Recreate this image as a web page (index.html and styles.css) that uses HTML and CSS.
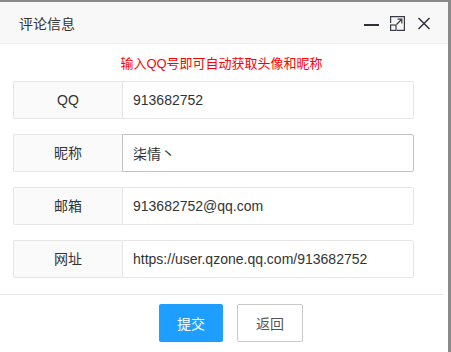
FILE: index.html
```html
<!DOCTYPE html>
<html lang="zh-CN">
<head>
    <meta charset="UTF-8">
    <meta name="viewport" content="width=device-width, initial-scale=1.0">
    <title>评论信息</title>
    <link rel="stylesheet" href="styles.css">
</head>
<body>

    <div class="layer">
        <div class="layer-title">
            <span>评论信息</span>
            <div class="layer-tools">
                <svg class="tool" width="15" height="14" viewBox="0 0 15 14">
                    <path d="M0 8h15" stroke="#2f2f3a" stroke-width="2"/>
                </svg>
                <svg class="tool" width="15" height="15" viewBox="0 0 15 15">
                    <path d="M0.6 7V0.6h13.8v13.8H7" fill="none" stroke="#3a3a46" stroke-width="1.2"/>
                    <rect x="0.6" y="9" width="5.4" height="5.4" fill="none" stroke="#3a3a46" stroke-width="1.2"/>
                    <path d="M6.5 8.5L11.5 3.5M7.5 3.2h4.3v4.3" fill="none" stroke="#3a3a46" stroke-width="1.2"/>
                </svg>
                <svg class="tool" width="12" height="13" viewBox="0 0 12 13">
                    <path d="M0.5 1l11 11M11.5 1l-11 11" stroke="#2f2f3a" stroke-width="1.5"/>
                </svg>
            </div>
        </div>

        <div class="layer-content">
            <p class="tip">输入QQ号即可自动获取头像和昵称</p>

            <form class="comment-form">
                <div class="form-item">
                    <label class="form-label">QQ</label>
                    <input class="form-input" type="text" value="913682752">
                </div>
                <div class="form-item">
                    <label class="form-label">昵称</label>
                    <input class="form-input hover" type="text" value="柒情丶">
                </div>
                <div class="form-item">
                    <label class="form-label">邮箱</label>
                    <input class="form-input" type="text" value="913682752@qq.com">
                </div>
                <div class="form-item">
                    <label class="form-label">网址</label>
                    <input class="form-input" type="text" value="https://user.qzone.qq.com/913682752">
                </div>
            </form>
        </div>

        <div class="layer-btns">
            <button class="btn btn-normal" type="button">提交</button>
            <button class="btn btn-primary" type="button">返回</button>
        </div>
    </div>

</body>
</html>
```

FILE: styles.css
```css
body {
    margin: 0;
    background-color: #8a8a8a;
    font-family: "Liberation Sans", "Noto Sans CJK SC", sans-serif;
    font-size: 14px;
    color: #333;
    overflow: hidden;
}

.layer {
    width: 448px;
    height: 360px;
    margin-top: 2px;
    background-color: #fff;
}

.layer-title {
    display: flex;
    align-items: center;
    justify-content: space-between;
    height: 41px;
    padding: 0 18px 0 19px;
    background-color: #f8f8f8;
    border-bottom: 1px solid #eee;
    color: #333;
}

.layer-tools {
    display: flex;
    align-items: center;
    gap: 11px;
    margin-top: 2px;
}

.layer-tools .tool:last-child {
    margin-left: 2px;
}

.tool {
    display: block;
}

.layer-content {
    width: 443px;
    padding-bottom: 16px;
    border-bottom: 1px solid #e6e6e6;
}

.tip {
    margin: 0;
    padding: 10px 0 7px;
    line-height: 20px;
    text-align: center;
    color: #ff0000;
    font-size: 13px;
}

.comment-form {
    margin: 0 0 0 13px;
    width: 401px;
}

.form-item {
    display: flex;
    height: 38px;
    margin-bottom: 15px;
}

.form-item:last-child {
    margin-bottom: 0;
}

.form-label {
    width: 108px;
    line-height: 36px;
    text-align: center;
    background-color: #fafafa;
    border: 1px solid #e6e6e6;
    border-right: none;
    border-radius: 2px 0 0 2px;
}

.form-input {
    flex: 1;
    min-width: 0;
    height: 38px;
    box-sizing: border-box;
    padding: 0 10px;
    margin: 0;
    border: 1px solid #e6e6e6;
    border-radius: 0 2px 2px 0;
    font-family: inherit;
    font-size: 14px;
    color: #333;
    outline: none;
}

.form-input.hover {
    border-color: #c2c2c2;
}

.layer-btns {
    display: flex;
    gap: 14px;
    padding: 9px 0 0 159px;
}

.btn {
    height: 38px;
    padding: 0 18px;
    border-radius: 2px;
    font-family: inherit;
    font-size: 14px;
    cursor: pointer;
}

.btn-normal {
    border: none;
    background-color: #1e9fff;
    color: #fff;
}

.btn-primary {
    border: 1px solid #c9c9c9;
    background-color: #fff;
    color: #555;
}
```
